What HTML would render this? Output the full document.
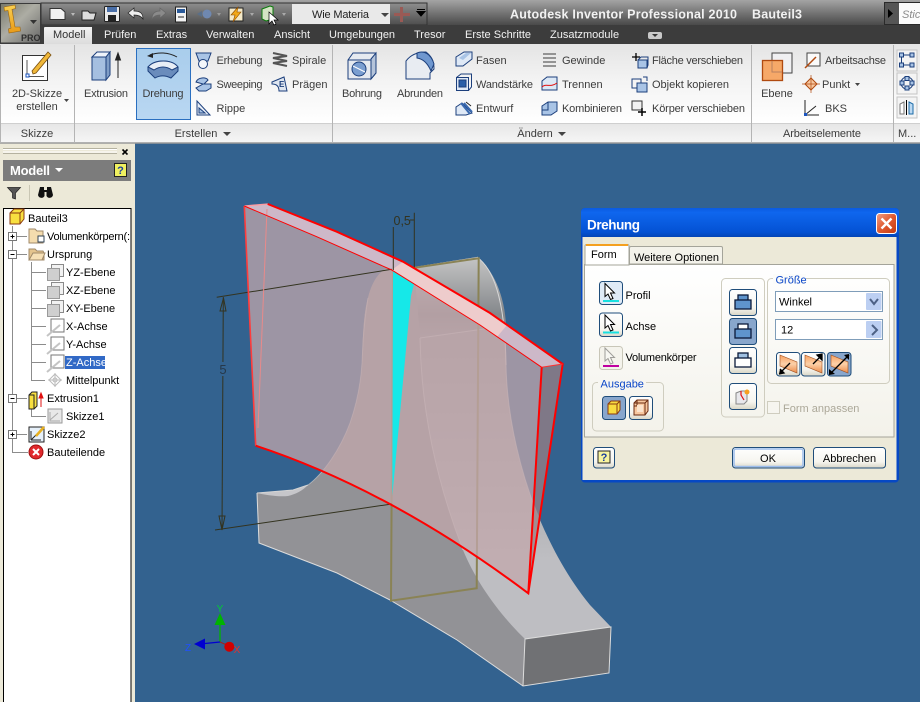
<!DOCTYPE html>
<html><head><meta charset="utf-8"><style>
html,body{margin:0;padding:0;background:#33628f;overflow:hidden}
svg{display:block;font-family:"Liberation Sans",sans-serif}
.r{font-size:11px;fill:#3c3c3c}
.c{font-size:11px;fill:#3c3c3c;text-anchor:middle}
.tab{font-size:11px;fill:#f2f2f2}
.k{font-size:11px;fill:#000}
.b{font-size:11px;fill:#0a46c8}
.i{fill:#dfe9f6;stroke:#1c3f7c;stroke-width:1}
.d{fill:#a9c4e6;stroke:#1c3f7c;stroke-width:1}
.n{fill:none;stroke:#1c3f7c;stroke-width:1}
.tl{stroke:#8c8c8c;stroke-width:1;fill:none}
</style></head><body>
<svg width="920" height="702" viewBox="0 0 920 702" xmlns="http://www.w3.org/2000/svg">
<defs>
<linearGradient id="gT" x1="0" y1="0" x2="0" y2="1"><stop offset="0" stop-color="#a4a4a4"/><stop offset=".5" stop-color="#747474"/><stop offset="1" stop-color="#464646"/></linearGradient>
<linearGradient id="gQ" x1="0" y1="0" x2="0" y2="1"><stop offset="0" stop-color="#8e8e8e"/><stop offset="1" stop-color="#4e4e4e"/></linearGradient>
<linearGradient id="gR" x1="0" y1="0" x2="0" y2="1"><stop offset="0" stop-color="#e4e4e4"/><stop offset=".45" stop-color="#f3f3f3"/><stop offset="1" stop-color="#fff"/></linearGradient>
<linearGradient id="gL" x1="0" y1="0" x2="0" y2="1"><stop offset="0" stop-color="#e6e6e6"/><stop offset="1" stop-color="#f6f6f6"/></linearGradient>
<linearGradient id="gTab" x1="0" y1="0" x2="0" y2="1"><stop offset="0" stop-color="#f2f2f2"/><stop offset="1" stop-color="#dcdcdc"/></linearGradient>
<linearGradient id="gApp" x1="0" y1="0" x2="1" y2="1"><stop offset="0" stop-color="#77776a"/><stop offset=".45" stop-color="#adadA4"/><stop offset="1" stop-color="#666"/></linearGradient>
<linearGradient id="gSel" x1="0" y1="0" x2="0" y2="1"><stop offset="0" stop-color="#a9cdec"/><stop offset="1" stop-color="#b9d7f2"/></linearGradient>
<linearGradient id="gWeb" gradientUnits="userSpaceOnUse" x1="0" y1="256" x2="0" y2="340"><stop offset="0" stop-color="#c6c6c6"/><stop offset=".7" stop-color="#84878b"/><stop offset="1" stop-color="#9a9a9e"/></linearGradient>
<linearGradient id="gBody" gradientUnits="userSpaceOnUse" x1="0" y1="340" x2="0" y2="560"><stop offset="0" stop-color="#9a9a9e"/><stop offset=".75" stop-color="#b2b2b6"/><stop offset="1" stop-color="#bebec2"/></linearGradient>
<linearGradient id="gTitle" x1="0" y1="0" x2="0" y2="1"><stop offset="0" stop-color="#0a5be0"/><stop offset=".15" stop-color="#0f66ee"/><stop offset=".8" stop-color="#0452d4"/><stop offset="1" stop-color="#0342b0"/></linearGradient>
<linearGradient id="gBtn" x1="0" y1="0" x2="0" y2="1"><stop offset="0" stop-color="#fff"/><stop offset=".7" stop-color="#f6f5ef"/><stop offset="1" stop-color="#d9d6c6"/></linearGradient>
<linearGradient id="gPanel" x1="0" y1="0" x2="0" y2="1"><stop offset="0" stop-color="#fff"/><stop offset="1" stop-color="#f3f2ea"/></linearGradient>
<linearGradient id="gClose" x1="0" y1="0" x2="1" y2="1"><stop offset="0" stop-color="#f0a088"/><stop offset=".5" stop-color="#e05a30"/><stop offset="1" stop-color="#c23a10"/></linearGradient>
<linearGradient id="gOr" x1="0" y1="0" x2="0" y2="1"><stop offset="0" stop-color="#f8a060"/><stop offset=".5" stop-color="#fcd0a8"/><stop offset="1" stop-color="#ec8a48"/></linearGradient>
<linearGradient id="gI" x1="0" y1="0" x2="0" y2="1"><stop offset="0" stop-color="#fbd050"/><stop offset="1" stop-color="#e89a18"/></linearGradient>
<path id="cur" d="M0,0 L0,13 L3,10.5 L5.5,16 L8,15 L5.5,9.5 L9.5,9.5 Z" fill="#fff" stroke="#000" stroke-width="1"/>
<g id="stack"><rect x="-5" y="-8" width="10" height="8" fill="currentColor" stroke="#0a1a3a" stroke-width="1.3"/><rect x="-8" y="-3" width="16" height="9" fill="currentColor" stroke="#0a1a3a" stroke-width="1.3"/></g>
<g id="plane"><rect x="0" y="0" width="12" height="12" fill="#f2f2f2" stroke="#8a8a8a"/><rect x="-4" y="4" width="12" height="12" fill="#cfcfcf" stroke="#9a9a9a"/></g>
<g id="axis"><rect x="2" y="0" width="13" height="13" fill="#fff" stroke="#777"/><path d="M-2,17 L11,6" stroke="#c4c4c4" stroke-width="2"/></g>
</defs>

<!-- VIEWPORT -->
<rect x="0" y="143" width="920" height="559" fill="#33628f"/>
<rect x="0" y="143" width="135" height="559" fill="#ece9d8"/>

<!-- MODEL -->
<path d="M257,493 L293,490 L308,485 C323,474 340,450 350,423 C358,400 361,380 362,363 C363,330 364,312 368,298 C372,282 378,274 385,269 L414,267 L477,257 C492,268 505,295 506,365 C507,420 522,478 540,520 C552,548 568,578 590,605 L611,627 L609,673 L523,686 L457,640 L390,600 L337,573 L259,543 Z" fill="url(#gBody)"/>
<path d="M414,267 L477,257 C492,268 505,295 506,326 L420,338 Z" fill="url(#gWeb)"/>
<path d="M257,493 L293,490 L308,485 C323,474 340,450 350,423 C358,400 361,380 362,363 C363,330 364,312 368,298 C372,282 378,274 385,269 L414,267 L420,338 C421,400 432,470 463,550 C476,582 500,615 525,639 L523,686 L457,640 L390,600 L337,573 L259,543 Z" fill="#929296"/>
<path d="M257,493 L293,490 L308,485 C302,491 296,494 288,496 C278,497 266,495 257,493 Z" fill="#c6c6ca"/>
<path d="M525,639 L611,627 L609,673 L523,686 Z" fill="#707174"/>
<path d="M257,493 L259,543 L337,573 L390,600 L457,640 L523,686 L609,673 L611,627 L525,639 L523,686" fill="none" stroke="#dcdcdc" stroke-width="1"/>
<path d="M257,493 L293,490 L308,485" fill="none" stroke="#d4d4d4"/>
<path d="M477,257 C492,268 505,295 506,365" fill="none" stroke="#d8d8d8"/>
<path d="M420,338 L505,326 M420,338 C421,400 432,470 463,550 M506,365 C507,420 522,478 540,520" fill="none" stroke="#d8d8d8" stroke-opacity=".6"/>
<path d="M368,298 C363,330 363,345 362,363 C361,380 358,400 350,423 C340,450 323,474 308,485" fill="none" stroke="#d8d8d8" stroke-opacity=".5"/>
<!-- olive sketch -->
<path d="M414.3,267.7 L478.7,258.3 L476.7,588.3 L391,600.7 L393,268" fill="none" stroke="#8a8355" stroke-width="2"/>

<!-- sheet -->
<path d="M244.3,206 L316.7,236.7 L391.7,270 L480,325 L541.7,367.3 L528.3,593.3 Q391.4,490.5 255.7,445.7 Z" fill="#c2a7ab" fill-opacity=".74"/>
<path d="M541.7,367.3 L562.7,364 L528.3,593.3 Z" fill="#9a8084" fill-opacity=".74"/>
<path d="M393,270.5 L414.3,268 L414,284 L411,296 L392.3,496 Z" fill="#16e8e8"/>
<path d="M244.3,206 L267.7,204 L336.7,231.7 L403,261.7 L490,313 L562.7,364 L541.7,367.3 L480,325 L391.7,270 L316.7,236.7 Z" fill="#cdb8c8"/>
<path d="M391.7,270 L403,261.7 L490,313 L507,325 L497,337 L480,325 Z" fill="#eecccc"/>
<!-- dimension -->
<g fill="none" stroke="#33331f" stroke-width="1">
<path d="M216.7,297.3 L391.7,269.3 M215,530 L391.7,504 M223.3,297 L222,530 M393.3,227 L393.3,270 M414.3,212.7 L414.3,268 M410,220 L414,220"/>
<path d="M223.5,298 L220,311 L226,311 Z M222,530 L219,516 L225,516 Z"/>
</g>
<rect x="218" y="362" width="11" height="14" fill="#33628f"/>
<text x="223" y="374" font-size="13" fill="#26384a" text-anchor="middle">5</text>
<text x="393.5" y="225" font-size="12.500" fill="#33331f">0,5</text>
<!-- red outline -->
<path d="M244.3,206 L255.7,445.7" stroke="#ff3c3c" stroke-width="1.6" fill="none"/>
<path d="M267,209 L258,428" stroke="#e88a8a" stroke-width="1" fill="none"/>
<path d="M244.3,206 L267.7,204" stroke="#ff9aa0" stroke-width="1.3" fill="none"/>
<path d="M267.7,204 L336.7,231.7 L403,261.7 L490,313 L562.7,364 L528.3,593.3 Q391.4,490.5 255.7,445.7" fill="none" stroke="#ff0000" stroke-width="2"/>
<path d="M244.3,206 L316.7,236.7 L391.7,270 L480,325 L541.7,367.3" fill="none" stroke="#ff0000" stroke-width="1"/>
<path d="M541.7,367.3 L562.7,364" fill="none" stroke="#ff3030" stroke-width="1"/>
<path d="M541.7,367.3 L528.3,593.3" fill="none" stroke="#ff0000" stroke-width="2"/>

<!-- triad -->
<path d="M220,642 L220,620" stroke="#00b400" stroke-width="1.3"/>
<path d="M220,613 L214.5,625 L225.5,625 Z" fill="#00b400"/>
<text x="220" y="612" font-size="10" fill="#00cc33" text-anchor="middle">Y</text>
<path d="M220,642 L200,644" stroke="#0000d0" stroke-width="1.3"/>
<path d="M194,644 L205,638.5 L205,649.5 Z" fill="#0000d0"/>
<text x="188" y="651" font-size="10" fill="#2050ff" text-anchor="middle">Z</text>
<path d="M220,642 L229,646" stroke="#a02020" stroke-width="1"/>
<circle cx="229.3" cy="646.7" r="5" fill="#d00000"/>
<text x="237" y="653" font-size="10" fill="#e03030" text-anchor="middle">X</text>

<!-- TITLE BAR -->
<rect x="0" y="0" width="920" height="26" fill="url(#gT)"/>
<rect x="41" y="3" width="386" height="22" fill="url(#gQ)" stroke="#333"/>
<rect x="0" y="25" width="920" height="19" fill="#3c3c3c"/>
<text x="510" y="18.500" font-size="12.500" font-weight="bold" fill="#f2f2f2" textLength="227" lengthAdjust="spacing">Autodesk Inventor Professional 2010</text>
<text x="752" y="18.500" font-size="12.500" font-weight="bold" fill="#f2f2f2" textLength="50" lengthAdjust="spacing">Bauteil3</text>
<rect x="884.500" y="2.500" width="40" height="22" fill="#555" stroke="#2a2a2a"/>
<path d="M888,9 L893,13.500 L888,18 Z" fill="#000"/>
<rect x="899" y="3" width="21" height="21" fill="#fbfbfb"/>
<text x="902" y="18" font-size="11" font-style="italic" fill="#8a8a8a">Stic</text>

<!-- App button -->
<rect x="0.500" y="3.500" width="40" height="39.500" fill="url(#gApp)" stroke="#3a3a3a"/>
<path d="M4,7 L15,5 L15.500,8.500 L12,9.500 L15,27 L20,27 L20.500,31 L9,33 L8.500,29 L11,28 L8,10.500 L4.500,11 Z" fill="url(#gI)" stroke="#9a6410" stroke-width=".6"/>
<path d="M30,20 L37,20 L33.500,24 Z" fill="#333"/>
<text x="21" y="41" font-size="9" font-weight="bold" fill="#2e2e2e">PRO</text>

<!-- QAT -->
<path d="M50,8.500 H61 L65,12 V19.500 H50 Z" fill="#f2f2f2" stroke="#333"/>
<path d="M71,13 L75,13 L73,16 Z" fill="#bbb"/>
<path d="M82,11 L88,11 L90,13 L96,13 L94,20 L82,20 Z" fill="#dcdcdc" stroke="#222"/>
<rect x="104.500" y="6.500" width="15" height="15" rx="1" fill="#eaeaea" stroke="#222"/>
<rect x="107" y="7" width="10" height="5" fill="#4a6fa8"/><rect x="108" y="15" width="8" height="6" fill="#222"/>
<path d="M128,13 L134,8 V11 C140,11 143,13 143,19 C141,16 138,15 134,15 V18 Z" fill="#eee" stroke="#222" stroke-width=".7"/>
<path d="M166,13 L160,8 V11 C155,11 152,13 152,19 C154,16 157,15 160,15 V18 Z" fill="#8a8a8a" stroke="#666" stroke-width=".7"/>
<rect x="175.500" y="7" width="11" height="15" fill="#f2f2f2" stroke="#222"/><rect x="177" y="9" width="8" height="4" fill="#2a5a9a"/><path d="M178,17 H184" stroke="#222"/>
<path d="M197,14 L202,11 V17 Z" fill="#5a6f88"/><circle cx="207" cy="14" r="4.500" fill="#6f88b0"/><path d="M217,13 L221,13 L219,16 Z" fill="#999"/>
<path d="M229,8 H243 V21 H229 Z" fill="#f4e9c8" stroke="#222"/><path d="M238,7 L231,15 L235,15 L233,22 L241,12 L237,12 Z" fill="#f2a818" stroke="#8a4a00" stroke-width=".6"/>
<path d="M250,13 L254,13 L252,16 Z" fill="#aaa"/>
<path d="M262,9 L270,6 L273,7 V19 L266,21 L262,19 Z" fill="#d4e4c4" stroke="#0a7a0a"/><path d="M269,12 L269,24 L272,21 L274,25 L276,24 L274,20 L278,20 Z" fill="#fff" stroke="#000" stroke-width=".7"/>
<path d="M282,13 L286,13 L284,16 Z" fill="#aaa"/>
<rect x="292" y="4" width="98" height="20" fill="#e9e9e9"/>
<text x="312" y="18" font-size="11" fill="#222" textLength="57">Wie Materia</text>
<path d="M381,13 L389,13 L385,17 Z" fill="#444"/>
<path d="M401.500,7 V22 M394,14.500 H410" stroke="#9a5a55" stroke-width="3"/>
<path d="M417,9.500 H425 M417,11.500 L425,11.500 L421,16 Z" stroke="#000" fill="#000"/>

<!-- TABS -->
<path d="M44,44 V28 Q44,27 45,27 H92 V44 Z" fill="url(#gTab)"/>
<text x="53" y="38" font-size="11" fill="#333">Modell</text>
<text class="tab" x="104" y="38">Prüfen</text>
<text class="tab" x="156" y="38">Extras</text>
<text class="tab" x="206" y="38">Verwalten</text>
<text class="tab" x="274" y="38">Ansicht</text>
<text class="tab" x="329" y="38">Umgebungen</text>
<text class="tab" x="414" y="38">Tresor</text>
<text class="tab" x="465" y="38">Erste Schritte</text>
<text class="tab" x="550" y="38">Zusatzmodule</text>
<rect x="648" y="32" width="14" height="7" rx="2" fill="#c8c8c8"/><path d="M652,34 H658 L655,37 Z" fill="#333"/>

<!-- RIBBON -->
<rect x="0" y="44" width="920" height="79" fill="url(#gR)"/>
<rect x="0" y="123" width="920" height="20" fill="url(#gL)"/>
<path d="M0,123.500 H920" stroke="#cfcfcf"/>
<path d="M0,143 H920" stroke="#9a9a9a" stroke-width="1.500"/>
<path d="M74.500,45 V143 M332.500,45 V143 M751.500,45 V143 M893.500,45 V143 M0.500,45 V143" stroke="#b4b4b4"/>

<!-- 2D-Skizze icon -->
<rect x="22.500" y="55.500" width="25" height="25" fill="#fff" stroke="#333"/>
<path d="M27,76.500 H44 M27,76 V60" stroke="#555"/><rect x="26" y="74" width="3" height="3" fill="#fff" stroke="#1b55c0"/>
<path d="M32,71 L33,74 L36,73 L51,55 L48,52 Z" fill="#f0b83a" stroke="#7a5010" stroke-width=".8"/>
<text class="c" x="37" y="97">2D-Skizze</text><text class="c" x="37" y="110">erstellen</text>
<path d="M64,99 H69 L66.500,102 Z" fill="#444"/>
<text class="c" x="37" y="137">Skizze</text>

<!-- Extrusion -->
<path d="M92,57 H106 V80 H92 Z" fill="#a5bfe0" stroke="#1c3f7c"/>
<path d="M92,57 L97,52 H110 L106,57 Z" fill="#eef3fa" stroke="#1c3f7c"/><path d="M106,57 V80 L110,75 V52 Z" fill="#7f9dc6" stroke="#1c3f7c"/>
<path d="M118,78 V56 M115.500,60 L118,53 L120.500,60 Z" stroke="#222" fill="#222"/>
<text class="c" x="106" y="97" textLength="44">Extrusion</text>

<!-- Drehung -->
<rect x="136.500" y="48.500" width="54" height="71" fill="url(#gSel)" stroke="#2a6fc0"/>
<path d="M150,55 C158,52 168,52 177,57" fill="none" stroke="#222"/><path d="M147,56 L153,53 L153,58 Z" fill="#222"/>
<path d="M148,67 C155,59 172,59 178,67 L178,71 L171,78 C165,75 160,75 155,78 L148,71 Z" fill="#6a8cbc" stroke="#1c3f7c"/>
<path d="M148,67 C155,59 172,59 178,67 L172,70 C166,66 160,66 154,70 Z" fill="#e8eef6" stroke="#1c3f7c"/>
<text class="c" x="163" y="97" textLength="41">Drehung</text>

<!-- small icons erstellen -->
<path d="M196,53 H211 L208,61 H199 Z" class="d"/><circle cx="203" cy="64" r="4.500" fill="#f4f7fb" stroke="#1c3f7c"/>
<path d="M196,82 C198,77 206,77 208,80 L204,84 H211 V88 L206,91 H199 L196,88 L203,84 Z" class="d"/>
<path d="M197,101 V115 H210 Z" fill="#e9eff8" stroke="#1c3f7c"/><path d="M199,108 L199,113 L205,113 Z" class="d"/>
<text class="r" x="216.500" y="64" textLength="46">Erhebung</text><text class="r" x="216.500" y="88" textLength="46">Sweeping</text><text class="r" x="216.500" y="112">Rippe</text>
<path d="M273,53 L287,56 L273,58 L287,61 L273,63 L287,66" fill="none" stroke="#555" stroke-width="2"/>
<path d="M272,82 L284,77 L287,91 H279 C279,86 276,84 272,84 Z" fill="#dfe6f0" stroke="#1c3f7c"/><text x="279" y="87" font-size="8" font-weight="bold" fill="#1c3f7c">E</text>
<text class="r" x="292" y="64">Spirale</text><text class="r" x="292" y="88">Prägen</text>
<text class="c" x="196" y="137">Erstellen</text><path d="M223,132 H231 L227,136 Z" fill="#444"/>

<!-- Bohrung/Abrunden -->
<path d="M348,60 L353,53 H376 V73 L371,79 H348 Z" fill="#e6eaf0" stroke="#1c3f7c"/><path d="M371,59 L376,53 V73 L371,79 Z" fill="#b5c4da" stroke="#1c3f7c"/><path d="M348,60 H371 V79" fill="none" stroke="#1c3f7c"/>
<circle cx="359" cy="69" r="7" fill="#7a9ed0" stroke="#1c3f7c"/><path d="M359,69 L365,72 M353,66 L359,69" stroke="#fff"/>
<text class="c" x="362" y="97" textLength="40">Bohrung</text>
<path d="M406,61 C412,53 420,52 426,52 C431,56 434,60 434,69 L430,73 V79 H406 Z" fill="#e8ecf2" stroke="#1c3f7c"/>
<path d="M417,53 C424,50 431,54 434,64 L431,71 C428,64 424,59 417,58 Z" fill="#6f97cf" stroke="#1c3f7c"/>
<text class="c" x="420" y="97" textLength="46">Abrunden</text>

<!-- Aendern column 1 -->
<path d="M456,57 L464,52 H472 V59 L463,66 H456 Z" class="i"/><path d="M459,58 L466,53 H471 L463,60 Z" fill="#a9c4e6"/>
<rect x="456.500" y="77.500" width="12" height="13" class="i"/><path d="M456.500,77.500 L461,74 H471.500 V87 L468.500,90.500" class="n"/><rect x="459" y="80" width="7" height="7" fill="#2a5fa8" stroke="#1c3f7c"/>
<path d="M456,107 L462,103 L472,113 L466,115 H456 Z" class="i"/><path d="M461,103 L470,114 M464,103 L472,112" stroke="#3a6ab0" stroke-width="2"/><path d="M466,102 L471,106" stroke="#222"/>
<text class="r" x="476" y="64">Fasen</text><text class="r" x="476" y="88" textLength="57">Wandstärke</text><text class="r" x="476" y="112">Entwurf</text>
<!-- col 2 -->
<path d="M543,54 H556 M543,58 H556 M543,62 H556 M543,66 H556" stroke="#777" stroke-width="1.500"/>
<path d="M542,81 L547,77 H557 V90 H542 Z" fill="#dce8f6" stroke="#1c3f7c"/><path d="M542,87 C546,83 550,88 557,83" fill="none" stroke="#e01010"/>
<path d="M542,106 L548,102 H557 V111 L551,115 H542 Z" class="d"/><path d="M548,102 V110 H542" class="n"/>
<text class="r" x="562" y="64">Gewinde</text><text class="r" x="562" y="88">Trennen</text><text class="r" x="562" y="112" textLength="60">Kombinieren</text>
<!-- col 3 -->
<path d="M636,53 V61 M632,57 H640" stroke="#000" stroke-width="1.300"/>
<rect x="638" y="60" width="9" height="8" class="d"/><path d="M638,60 L641,57 H648 V65 L647,68" class="n"/>
<rect x="632" y="79" width="9" height="9" fill="none" stroke="#1c3f7c"/><rect x="637" y="83" width="10" height="9" class="d"/><path d="M643,77 H647 V81" class="n"/>
<rect x="632" y="101" width="10" height="9" fill="#f2f2f2" stroke="#333"/><path d="M642,108 V116 M638,112 H646" stroke="#000" stroke-width="1.500"/>
<text class="r" x="652" y="64" textLength="91">Fläche verschieben</text><text class="r" x="652" y="88" textLength="77">Objekt kopieren</text><text class="r" x="652" y="112" textLength="93">Körper verschieben</text>
<text class="c" x="535" y="137">Ändern</text><path d="M558,132 H566 L562,136 Z" fill="#444"/>

<!-- Arbeitselemente -->
<rect x="772" y="53" width="20" height="20" fill="#f0f0f2" stroke="#444"/>
<rect x="762.500" y="60.500" width="20" height="20" fill="#f6a868" stroke="#b04a10" stroke-width="1.300"/>
<path d="M772,61 V72 H782" fill="none" stroke="#b88060"/>
<text class="c" x="777" y="97">Ebene</text>
<rect x="807" y="53" width="13" height="13" fill="#fafafa" stroke="#444"/><path d="M805,68 L816,57" stroke="#b04a10" stroke-width="1.500"/>
<text class="r" x="825" y="64" textLength="61">Arbeitsachse</text>
<path d="M805,84 L811,78 L817,84 L811,90 Z" fill="#f8c8a0" stroke="#b04a10"/><path d="M802,84 H820 M811,75 V93" stroke="#b04a10" stroke-width=".7"/>
<text class="r" x="822" y="88">Punkt</text><path d="M855,83 H860 L857.500,86 Z" fill="#444"/>
<path d="M805,100 V115 H819 M805,115 L816,106" fill="none" stroke="#222"/><rect x="804" y="113" width="3" height="3" fill="#1b55c0"/>
<text class="r" x="825" y="112">BKS</text>
<text class="c" x="822" y="137" textLength="78">Arbeitselemente</text>
<text x="898" y="137" font-size="11" fill="#3c3c3c">M...</text>
<g>
<rect x="897" y="50" width="20" height="21" fill="#f4f4f4" stroke="#c4c4c4"/>
<rect x="899.500" y="53" width="4" height="4" fill="#a9c4e6" stroke="#1c3f7c"/><rect x="910" y="53" width="4" height="4" fill="#a9c4e6" stroke="#1c3f7c"/><rect x="899.500" y="63" width="4" height="4" fill="#a9c4e6" stroke="#1c3f7c"/><rect x="910" y="63" width="4" height="4" fill="#a9c4e6" stroke="#1c3f7c"/>
<path d="M903.500,55 H910 M903.500,65 H910 M901.500,57 V63" stroke="#1c3f7c"/>
<rect x="897" y="73" width="20" height="21" fill="#f4f4f4" stroke="#c4c4c4"/>
<circle cx="907" cy="83" r="6" fill="none" stroke="#1c3f7c"/><rect x="905" y="76.500" width="4" height="4" fill="#a9c4e6" stroke="#1c3f7c"/><rect x="905" y="86" width="4" height="4" fill="#a9c4e6" stroke="#1c3f7c"/><rect x="900" y="81" width="4" height="4" fill="#a9c4e6" stroke="#1c3f7c"/><rect x="910" y="81" width="4" height="4" fill="#a9c4e6" stroke="#1c3f7c"/>
<rect x="897" y="97" width="20" height="21" fill="#f4f4f4" stroke="#c4c4c4"/>
<path d="M906.500,100 V115" stroke="#000"/><path d="M904,102 L900,104 V114 H904 Z" fill="#fff" stroke="#777"/><path d="M909,102 L913,104 V114 H909 Z" fill="#bcd9f2" stroke="#1c6ca8"/>
</g>

<!-- LEFT PANEL -->
<path d="M3,148.500 H117 M3,153.500 H117" stroke="#b5b2a0"/><path d="M3,149.500 H117 M3,152 H117" stroke="#fff"/>
<path d="M122.500,149.500 L127.500,154.500 M127.500,149.500 L122.500,154.500" stroke="#000" stroke-width="1.600"/>
<rect x="3" y="160" width="128" height="21" fill="#7c7c7c"/>
<text x="10" y="175" font-size="13" font-weight="bold" fill="#fff" textLength="40">Modell</text>
<path d="M55,168 H63 L59,172 Z" fill="#fff"/>
<rect x="114.500" y="163.500" width="12" height="13" fill="#f0f060" stroke="#222"/><text x="120.500" y="174" font-size="11" font-weight="bold" fill="#1c3f9c" text-anchor="middle">?</text>
<path d="M7.500,187.500 H20.500 L15.500,193 V199 L12.500,198 V193 Z" fill="#555" stroke="#222" stroke-width=".7"/>
<path d="M29.500,185 V201" stroke="#c9c6b4"/>
<path d="M40,187 H44 V190 H47 V187 H51 L53,195 A3.500,3.500 0 0 1 46.500,196 V192 H44.500 V196 A3.500,3.500 0 0 1 38,195 Z" fill="#111"/>
<rect x="3.500" y="208.500" width="127.500" height="500" fill="#fff" stroke="#000"/>

<!-- tree lines -->
<path class="tl" d="M12.500,226 V452.500 H28 M12.500,236.500 H27 M12.500,254.500 H27 M12.500,398.500 H27 M12.500,434.500 H27 M31.500,262 V380.500 H45 M31.500,272.500 H46 M31.500,290.500 H46 M31.500,308.500 H46 M31.500,326.500 H46 M31.500,344.500 H46 M31.500,362.500 H46 M31.500,406 V416.500 H46"/>
<g fill="#fff" stroke="#777"><rect x="8.500" y="232.500" width="8" height="8"/><rect x="8.500" y="250.500" width="8" height="8"/><rect x="8.500" y="394.500" width="8" height="8"/><rect x="8.500" y="430.500" width="8" height="8"/></g>
<path d="M10.500,236.500 H14.500 M12.500,234.500 V238.500 M10.500,254.500 H14.500 M10.500,398.500 H14.500 M10.500,434.500 H14.500 M12.500,432.500 V436.500" stroke="#000"/>

<!-- tree icons -->
<path d="M10,213 L14,209 H24 V219 L20,224 H10 Z" fill="#f8e040" stroke="#8a3a10"/><path d="M10,213 H20 V224 M20,213 L24,209" fill="none" stroke="#8a3a10"/>
<path d="M29,229 H35 L37,231 H43 V243 H29 Z" fill="#f4dcae" stroke="#a08a6a"/><rect x="38" y="236" width="6" height="6" fill="#fff" stroke="#345"/>
<path d="M29,249 H35 L37,251 H43 L44,253 V260 H29 Z" fill="#e4c48e" stroke="#a08a6a"/><path d="M29,260 L33,253 H45 L42,260 Z" fill="#f6e0b6" stroke="#a08a6a"/>
<use href="#plane" x="51.500" y="264.500"/><use href="#plane" x="51.500" y="282.500"/><use href="#plane" x="51.500" y="300.500"/>
<use href="#axis" x="49" y="319"/><use href="#axis" x="49" y="337"/><use href="#axis" x="49" y="355"/>
<g fill="none" stroke="#bbb"><path d="M55,374 L61,380 L55,386 L49,380 Z"/><circle cx="55" cy="380" r="2"/><path d="M48,380 H62 M55,373 V387"/></g>
<path d="M29,395 L32,392 H37 V406 L34,409 H29 Z" fill="#f8e040" stroke="#222"/><path d="M29,395 H34 V409" fill="none" stroke="#222"/><path d="M41,407 V396 M39,398 L41,393 L43,398 Z" stroke="#e01010" fill="#e01010"/>
<rect x="48" y="409" width="14" height="14" fill="#e8e8e8" stroke="#999"/><path d="M50,420 L58,413 M50,412 V421 H60" stroke="#aaa" fill="none"/>
<rect x="29" y="427" width="15" height="15" fill="#e6f0fa" stroke="#222"/><path d="M31,440 V431 M31,440 H41 M31,440 L37,434" stroke="#222" fill="none"/><path d="M36,436 L44,427" stroke="#e8b020" stroke-width="2.500"/>
<circle cx="36" cy="452" r="7" fill="#e0282c" stroke="#a01010"/><path d="M33,449 L39,455 M39,449 L33,455" stroke="#fff" stroke-width="2"/>

<rect x="65" y="356" width="40" height="13" fill="#3169c6"/>
<g class="t">
<text class="k" x="28" y="222">Bauteil3</text>
<text class="k" x="47" y="240" textLength="83">Volumenkörpern(:</text>
<text class="k" x="47" y="258">Ursprung</text>
<text class="k" x="66" y="276">YZ-Ebene</text>
<text class="k" x="66" y="294">XZ-Ebene</text>
<text class="k" x="66" y="312">XY-Ebene</text>
<text class="k" x="66" y="330">X-Achse</text>
<text class="k" x="66" y="348">Y-Achse</text>
<text x="66" y="366" font-size="11" fill="#fff">Z-Achse</text>
<text class="k" x="66" y="384">Mittelpunkt</text>
<text class="k" x="47" y="402">Extrusion1</text>
<text class="k" x="66" y="420">Skizze1</text>
<text class="k" x="47" y="438">Skizze2</text>
<text class="k" x="47" y="456">Bauteilende</text>
</g>

<!-- DIALOG -->
<rect x="581" y="208" width="318" height="274.500" rx="4" fill="#0648c4"/>
<rect x="581" y="208" width="318" height="30" rx="4" fill="url(#gTitle)"/>
<rect x="582.500" y="237" width="314" height="243" fill="#ece9d8"/>
<text x="587" y="229.500" font-size="13.500" font-weight="bold" fill="#fff" textLength="53">Drehung</text>
<rect x="876.500" y="213.500" width="20" height="20" rx="3" fill="url(#gClose)" stroke="#fff"/>
<path d="M881.500,218.500 L891.500,228.500 M891.500,218.500 L881.500,228.500" stroke="#fff" stroke-width="2.400"/>

<rect x="584.500" y="264.500" width="309.500" height="172.500" fill="url(#gPanel)" stroke="#a4a49a"/>
<path d="M629.500,264 V248 Q629.500,246.500 631,246.500 H721 Q722.500,246.500 722.500,248 V264 Z" fill="#f3f2ea" stroke="#a4a49a"/>
<path d="M585,265 V246 Q585,244.500 587,244.500 H627 Q629,244.500 629,246 V265 Z" fill="#fff" stroke="#a4a49a"/>
<path d="M586,245 H628" stroke="#f4a020" stroke-width="2"/>
<text class="k" x="591" y="258">Form</text>
<text class="k" x="634" y="261" textLength="85">Weitere Optionen</text>

<!-- left selects -->
<rect x="599.500" y="281.500" width="23" height="23" rx="3" fill="#dfeaf6" stroke="#1f4d7a"/>
<use href="#cur" x="605" y="283.500"/><path d="M603,301 H619" stroke="#18e0e0" stroke-width="2"/>
<rect x="599.500" y="313" width="23" height="23.500" rx="3" fill="url(#gBtn)" stroke="#1f4d7a"/>
<use href="#cur" x="605" y="315"/><path d="M603,332.500 H619" stroke="#18e0e0" stroke-width="2"/>
<rect x="599.500" y="346.500" width="23" height="23" rx="3" fill="#f4f3ec" stroke="#c8c6b8"/>
<g opacity=".35"><use href="#cur" x="605" y="348"/></g><path d="M603,366 H619" stroke="#c000a0" stroke-width="2"/>
<text class="k" x="625.500" y="299">Profil</text>
<text class="k" x="625.500" y="330">Achse</text>
<text class="k" x="625.500" y="361" textLength="71">Volumenkörper</text>

<rect x="592.500" y="382.500" width="71" height="48.500" rx="4" fill="none" stroke="#cfcdbf"/>
<rect x="598" y="378" width="48" height="10" fill="#f7f6f1"/>
<text class="b" x="600.500" y="387.500">Ausgabe</text>
<rect x="602.500" y="396.500" width="23" height="23" rx="3" fill="#88a6cc" stroke="#1f4d7a"/>
<path d="M608,404 L611,401 H620 V410 L617,414 H608 Z" fill="#f8dc40" stroke="#8a3a10"/><path d="M608,404 H617 V414 M617,404 L620,401" fill="none" stroke="#8a3a10"/>
<rect x="629.500" y="396.500" width="23" height="23" rx="3" fill="url(#gBtn)" stroke="#1f4d7a"/>
<path d="M634,403 L637,400 H648 V411 L645,415 H634 Z" fill="#f8c8a0" stroke="#6a2a10"/><path d="M634,403 H645 V415 M645,403 L648,400 M637,400 V406 H634" fill="none" stroke="#6a2a10"/><rect x="637" y="405" width="6" height="7" fill="#fbe3cc"/>

<!-- middle group -->
<rect x="721.500" y="278.500" width="43" height="138.500" rx="4" fill="none" stroke="#cfcdbf"/>
<rect x="729.500" y="289.500" width="27" height="26" rx="3" fill="url(#gBtn)" stroke="#1f4d7a"/>
<g color="#5f94cc" transform="translate(743,303)"><use href="#stack"/></g>
<rect x="729.500" y="318.500" width="27" height="26" rx="3" fill="#88a6cc" stroke="#1f4d7a"/>
<g transform="translate(743,332)"><rect x="-5" y="-8" width="10" height="8" fill="#fff" stroke="#0a1a3a" stroke-width="1.300"/><rect x="-8" y="-3" width="16" height="9" fill="#5f94cc" stroke="#0a1a3a" stroke-width="1.300"/></g>
<rect x="729.500" y="347.500" width="27" height="26" rx="3" fill="url(#gBtn)" stroke="#1f4d7a"/>
<g transform="translate(743,361)"><rect x="-5" y="-8" width="10" height="8" fill="#9fc0e2" stroke="#0a1a3a" stroke-width="1.300"/><rect x="-8" y="-3" width="16" height="9" fill="#fff" stroke="#0a1a3a" stroke-width="1.300"/></g>
<rect x="729.500" y="383.500" width="27" height="26" rx="3" fill="url(#gBtn)" stroke="#1f4d7a"/>
<path d="M736,393 L741,391 H747 V401 L744,404 H736 Z" fill="#e8e8ec" stroke="#888"/><path d="M741,391 V395 L744,400" fill="none" stroke="#e01010" stroke-width="1.200"/><circle cx="747" cy="392" r="2.500" fill="#f8a020"/>

<!-- Groesse -->
<rect x="767.500" y="278.500" width="122" height="105" rx="4" fill="none" stroke="#cfcdbf"/>
<rect x="773" y="274" width="33" height="10" fill="#fcfcfa"/>
<text class="b" x="775.500" y="283.500">Größe</text>
<rect x="775.500" y="291.500" width="107" height="20" fill="#fff" stroke="#7f9db9"/>
<rect x="866" y="293" width="15.500" height="17" rx="1" fill="#bccff2"/>
<path d="M870,299 L874,304 L878,299" fill="none" stroke="#4d6185" stroke-width="2"/>
<text class="k" x="779" y="305.500">Winkel</text>
<rect x="775.500" y="319.500" width="107" height="20" fill="#fff" stroke="#7f9db9"/>
<rect x="866" y="321" width="15.500" height="17" rx="1" fill="#bccff2"/>
<path d="M872,325 L877,330 L872,335" fill="none" stroke="#4d6185" stroke-width="2"/>
<text class="k" x="781" y="333.500">12</text>
<rect x="776.500" y="352.500" width="23.500" height="23.500" rx="3" fill="url(#gBtn)" stroke="#1f4d7a"/>
<path d="M780,355 L797,362 V373 L780,366 Z" fill="url(#gOr)" stroke="#a05020" stroke-width=".6"/><path d="M780,373 L790,363 M779,374 L784,373 L780,369" stroke="#000" fill="#000" stroke-width="1.300"/>
<rect x="801.500" y="352.500" width="23.500" height="23.500" rx="3" fill="url(#gBtn)" stroke="#1f4d7a"/>
<path d="M805,355 L822,362 V373 L805,366 Z" fill="url(#gOr)" stroke="#a05020" stroke-width=".6"/><path d="M813,364 L822,355 M822,354 L822,360 L817,355 Z" stroke="#000" fill="#000" stroke-width="1.300"/>
<rect x="827.500" y="352.500" width="23.500" height="23.500" rx="3" fill="#88a6cc" stroke="#1f4d7a"/>
<path d="M831,355 L848,362 V373 L831,366 Z" fill="url(#gOr)" stroke="#a05020" stroke-width=".6"/><path d="M830,374 L849,355" stroke="#000" stroke-width="1.300"/><path d="M849,354 V360 L844,355 Z M829,375 V369 L835,374 Z" fill="#000"/>

<rect x="767.500" y="401.500" width="12" height="12" fill="#f6f5ef" stroke="#cfcdbf"/>
<text x="783" y="412" font-size="11" fill="#aca899">Form anpassen</text>

<!-- bottom buttons -->
<rect x="593.500" y="447.500" width="21" height="20.500" rx="3" fill="url(#gBtn)" stroke="#1f4d7a"/>
<rect x="598" y="451" width="12" height="12" fill="#f8f4a0" stroke="#222"/><text x="604" y="461" font-size="11" font-weight="bold" fill="#1c3f9c" text-anchor="middle">?</text>
<rect x="732.500" y="447.500" width="72" height="20.500" rx="3" fill="url(#gBtn)" stroke="#1f4d7a"/>
<rect x="734" y="449" width="69" height="17.500" rx="2" fill="none" stroke="#9cbdec" stroke-width="1.500"/>
<text class="k" x="768" y="462" text-anchor="middle">OK</text>
<rect x="813.500" y="447.500" width="72" height="20.500" rx="3" fill="url(#gBtn)" stroke="#1f4d7a"/>
<text class="k" x="849.500" y="462" text-anchor="middle">Abbrechen</text>
</svg>
</body></html>
